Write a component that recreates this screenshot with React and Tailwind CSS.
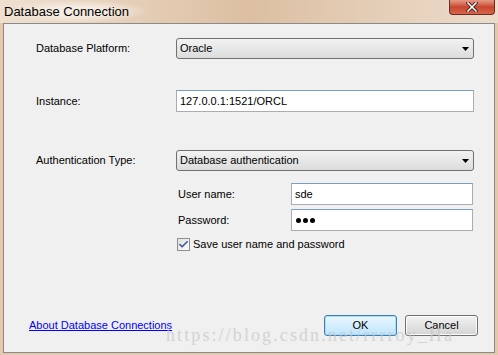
import { Check } from 'lucide-react';

const font = { fontFamily: '"Liberation Sans", Arial, sans-serif' };

const Arrow = () => (
  <svg width="7" height="4" viewBox="0 0 7 4" className="shrink-0">
    <path d="M0 0h7L3.5 4z" fill="#000" />
  </svg>
);

const Select = ({ value, className = '' }) => (
  <div className={`flex items-center justify-between h-[21px] px-[3px] pr-[4px] border border-[#707070] rounded-[3px] bg-gradient-to-b from-[#f2f2f2] to-[#dcdcdc] text-[11px] text-black ${className}`}>
    <span>{value}</span>
    <Arrow />
  </div>
);

const Input = ({ children, className = '' }) => (
  <div className={`flex items-center h-[22px] px-[3px] bg-white border border-[#abadb3] border-t-[#7a9ebf] text-[11px] text-black ${className}`}>
    {children}
  </div>
);

const Button = ({ label, focused }) => (
  <div
    className={`flex items-center justify-center w-[73px] h-[21px] rounded-[3px] border text-[11px] text-black ${
      focused
        ? 'border-[#3c7fb1] bg-gradient-to-b from-[#eaf6fd] to-[#bee6fd] shadow-[inset_0_0_0_1px_#aadcfb]'
        : 'border-[#707070] bg-gradient-to-b from-[#f2f2f2] to-[#d5d5d5] shadow-[inset_0_0_0_1px_#fcfcfc]'
    }`}
  >
    {label}
  </div>
);

export default function App() {
  return (
    <div className="relative w-[498px] h-[355px] overflow-hidden flex flex-col bg-[#e3c8ac]" style={font}>
      {/* title bar */}
      <div className="relative h-[23px] shrink-0 flex items-center bg-gradient-to-r from-[#efe0d0] via-[#dcbfa2] to-[#ecdccb]">
        <div className="absolute left-0 top-0 w-[150px] h-[23px] bg-[radial-gradient(ellipse_at_center,#f6ece2_30%,transparent_70%)]" />
        <span className="relative pl-[4px] text-[13px] text-black">Database Connection</span>
        <div className="absolute right-[3px] top-0 w-[46px] h-[15px] rounded-b-[4px] border border-t-0 border-[#6b2b21] bg-gradient-to-b from-[#e49a88] via-[#c9462f] to-[#d6664c] flex items-center justify-center">
          <svg width="12" height="10" viewBox="0 0 12 10">
            <path d="M2 1l8 8M10 1l-8 8" stroke="#3a1a14" strokeWidth="3.2" strokeLinecap="square" />
            <path d="M2 1l8 8M10 1l-8 8" stroke="#fff" strokeWidth="1.6" strokeLinecap="square" />
          </svg>
        </div>
      </div>

      {/* client area */}
      <div className="flex-1 mx-[3px] mb-[2px] border border-[#8a8a8a] bg-[#f0f0f0] flex flex-col pl-[32px] pr-[20px] text-[11px] text-black">
        <div className="flex items-center mt-[14px]">
          <span className="w-[140px]">Database Platform:</span>
          <Select value="Oracle" className="flex-1" />
        </div>

        <div className="flex items-center mt-[31px]">
          <span className="w-[140px]">Instance:</span>
          <Input className="flex-1">127.0.0.1:1521/ORCL</Input>
        </div>

        <div className="flex items-center mt-[38px]">
          <span className="w-[140px]">Authentication Type:</span>
          <Select value="Database authentication" className="flex-1" />
        </div>

        <div className="flex flex-col ml-[142px] mr-[1px]">
          <div className="flex items-center mt-[12px]">
            <span className="w-[113px]">User name:</span>
            <Input className="flex-1">sde</Input>
          </div>
          <div className="flex items-center mt-[4px]">
            <span className="w-[113px]">Password:</span>
            <Input className="flex-1">
              <span className="flex gap-[2px] pl-[1px]">
                <span className="w-[5px] h-[5px] rounded-full bg-black" />
                <span className="w-[5px] h-[5px] rounded-full bg-black" />
                <span className="w-[5px] h-[5px] rounded-full bg-black" />
              </span>
            </Input>
          </div>
          <div className="flex items-center mt-[5px] -ml-[1px]">
            <span className="w-[13px] h-[13px] border border-[#8f8f8f] bg-gradient-to-br from-[#e0e0e0] to-[#fbfbfb] flex items-center justify-center">
              <Check size={11} strokeWidth={3.5} color="#3d5a98" />
            </span>
            <span className="ml-[3px]">Save user name and password</span>
          </div>
        </div>

        <div className="flex items-center justify-between mt-auto mb-[16px] -ml-[7px] mr-[-4px]">
          <span className="text-[#0000ff] underline text-[11px]">About Database Connections</span>
          <div className="flex gap-[8px]">
            <Button label="OK" focused />
            <Button label="Cancel" />
          </div>
        </div>
      </div>

      {/* watermark */}
      <div
        className="absolute left-[166px] top-[322px] text-[18px] text-[#c8c8c8] opacity-70 pointer-events-none whitespace-nowrap"
        style={{ fontFamily: '"Liberation Serif", serif', letterSpacing: '2.1px' }}
      >
        https://blog.csdn.net/rrrroy_Ha
      </div>
    </div>
  );
}
